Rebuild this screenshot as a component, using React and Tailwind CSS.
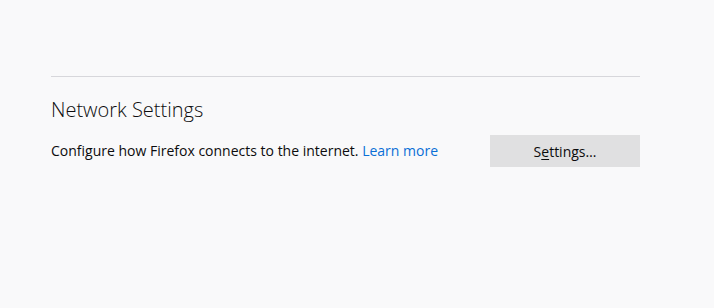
export default function App() {
  return (
    <div className="w-[714px] h-[308px] bg-[#f9f9fa] text-[#0c0c0d]" style={{ fontFamily: '"Open Sans", "Noto Sans", sans-serif' }}>
      <div className="pt-[76px] pl-[51px] w-[640px]">
        <div className="h-px bg-[#d7d7db]" />
        <h1 className="mt-[19px] text-[20px] leading-[28px] font-light">Network Settings</h1>
        <div className="mt-[11px] flex items-center justify-between">
          <p className="text-[14px] leading-[20px]">
            Configure how Firefox connects to the internet.{" "}
            <a className="text-[#0a6fd6]">Learn more</a>
          </p>
          <button className="w-[150px] h-[32px] bg-[#e0e0e1] text-[14px] text-[#0c0c0d]">
            S<span className="underline underline-offset-2">e</span>ttings…
          </button>
        </div>
      </div>
    </div>
  );
}
